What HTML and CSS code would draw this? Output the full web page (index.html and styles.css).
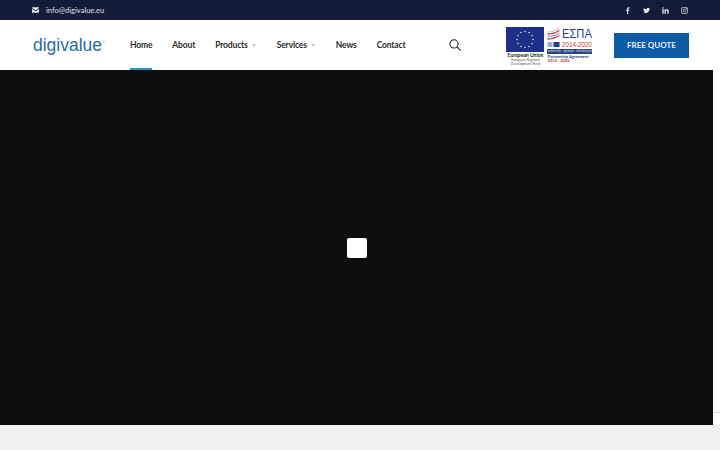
FILE: index.html
```html
<!DOCTYPE html>
<html lang="en">
<head>
    <meta charset="UTF-8">
    <meta name="viewport" content="width=device-width, initial-scale=1.0">
    <title>Digivalue</title>
    <link rel="stylesheet" href="styles.css">
</head>
<body>
    <div class="topbar">
        <a href="#" class="mail">
            <svg class="mail-icon" viewBox="0 0 14 11"><path d="M0 1.2C0 .5.5 0 1.2 0h11.6c.7 0 1.2.5 1.2 1.2v.5L7 6.2 0 1.7zM0 3.3l7 4.5 7-4.5v6.500c0 .7-.5 1.2-1.2 1.2H1.2C.5 11 0 10.500 0 9.800z" fill="#e8eaef"/></svg>
            info@digivalue.eu
        </a>
        <div class="social">
            <a href="#"><svg viewBox="0 0 10 10"><path d="M6 10V5.500h1.500L7.800 3.800H6V2.800c0-.5.200-.8.800-.8h1V.4C7.500.3 7.100.3 6.600.3 5.200.3 4.300 1.100 4.300 2.600v1.200H2.800v1.700h1.500V10z" fill="#e8eaef"/></svg></a>
            <a href="#"><svg viewBox="0 0 10 10"><path d="M10 2.100c-.4.200-.8.300-1.200.3.400-.2.800-.6.900-1.100-.4.200-.8.400-1.300.5C8 1.400 7.500 1.200 7 1.200 5.800 1.200 5 2.300 5.200 3.400 3.500 3.300 2 2.500 1 1.300.5 2.200.7 3.400 1.600 4c-.3 0-.6-.1-.9-.2 0 .9.600 1.700 1.600 1.900-.3.100-.6.100-.9 0 .3.800 1 1.300 1.900 1.300-.8.700-1.900 1-3 .9.900.6 2 .9 3.100.9 3.800 0 5.900-3.200 5.800-6 .4-.2.700-.5.800-.8z" fill="#e8eaef"/></svg></a>
            <a href="#"><svg viewBox="0 0 10 10"><path d="M.5 3.300h1.900V9.500H.5zM1.500.4a1.100 1.100 0 1 1 0 2.200 1.100 1.100 0 0 1 0-2.200zM3.600 3.300h1.800v.9c.3-.5.900-1 1.900-1 2 0 2.300 1.300 2.300 3v3.300H7.700V6.600c0-.7 0-1.600-1-1.600s-1.200.8-1.200 1.600v2.900H3.600z" fill="#e8eaef"/></svg></a>
            <a href="#"><svg viewBox="0 0 10 10" fill="none" stroke="#e8eaef"><rect x=".6" y=".6" width="8.800" height="8.800" rx="2.400"/><circle cx="5" cy="5" r="2"/><circle cx="7.500" cy="2.500" r=".4"/></svg></a>
        </div>
    </div>

    <header class="site-header">
        <a href="#" class="logo">digivalue<span class="logo-mark">®</span></a>
        <nav class="main-nav">
            <a href="#" class="active">Home</a>
            <a href="#">About</a>
            <a href="#" class="has-sub">Products</a>
            <a href="#" class="has-sub">Services</a>
            <a href="#">News</a>
            <a href="#">Contact</a>
        </nav>
        <svg class="search" viewBox="0 0 14 14" fill="none" stroke="#222" stroke-width="1.200"><circle cx="5.800" cy="5.800" r="4.800"/><path d="M9.300 9.300l4 4" stroke-linecap="round"/></svg>
        <div class="partners">
            <div class="eu">
                <svg class="eu-flag" viewBox="0 0 38 25">
                    <rect width="38" height="25" fill="#1c2f8a"/>
                    <g fill="#e9e39a">
                        <circle cx="19" cy="4.500" r=".8"/><circle cx="23" cy="5.500" r=".8"/><circle cx="26" cy="8.500" r=".8"/>
                        <circle cx="27" cy="12.500" r=".8"/><circle cx="26" cy="16.500" r=".8"/><circle cx="23" cy="19.500" r=".8"/>
                        <circle cx="19" cy="20.500" r=".8"/><circle cx="15" cy="19.500" r=".8"/><circle cx="12" cy="16.500" r=".8"/>
                        <circle cx="11" cy="12.500" r=".8"/><circle cx="12" cy="8.500" r=".8"/><circle cx="15" cy="5.500" r=".8"/>
                    </g>
                </svg>
                <div class="eu-title">European Union</div>
                <div class="eu-sub">European Regional<br>Development Fund</div>
            </div>
            <div class="espa">
                <div class="espa-top">
                    <svg class="espa-waves" viewBox="0 0 12 12" fill="none" stroke-width="1.300">
                        <path d="M0 4C4 4 8 3 12 0" stroke="#c9d2e2"/>
                        <path d="M0 6C4 6 8 5 12 2.500" stroke="#d0343a"/>
                        <path d="M0 8.500C4 8.500 8 7.500 12 5" stroke="#8f9fc0"/>
                        <path d="M0 11C4 11 8 10 12 7.500" stroke="#d0343a"/>
                    </svg>
                    <span class="espa-name">ΕΣΠΑ</span>
                </div>
                <div class="espa-mid">
                    <svg class="espa-flag" viewBox="0 0 12 5"><rect width="5" height="5" fill="#9fb0cc"/><rect x="6" width="6" height="5" fill="#1f3f88"/></svg>
                    <span class="espa-years">2014-2020</span>
                </div>
                <div class="espa-band">ανάπτυξη · εργασία · αλληλεγγύη</div>
                <div class="espa-foot">Partnership Agreement<br><span>2014 - 2020</span></div>
            </div>
        </div>
        <a href="#" class="quote-btn">FREE QUOTE</a>
    </header>

    <div class="stage-row">
        <section class="stage">
            <div class="loader"></div>
        </section>
    </div>

    <footer class="page-foot"></footer>
    <div class="captcha-edge"></div>
</body>
</html>
```

FILE: styles.css
```css
html, body {
    margin: 0;
    height: 450px;
    overflow: hidden;
    font-family: 'Lato', 'Open Sans', sans-serif;
    background: #f1f1f1;
}

a {
    text-decoration: none;
}

/* Top bar */
.topbar {
    height: 20px;
    background: #131d3a;
    display: flex;
    justify-content: space-between;
    align-items: center;
    padding: 0 32px;
}

.mail {
    display: flex;
    align-items: center;
    gap: 7px;
    color: #d4d7df;
    font-size: 7.500px;
    font-weight: 500;
}

.mail-icon {
    width: 7px;
    height: 6px;
}

.social {
    display: flex;
    align-items: center;
    gap: 12px;
}

.social a {
    display: flex;
}

.social svg {
    width: 7px;
    height: 7px;
}

/* Header */
.site-header {
    height: 50px;
    background: #fff;
    display: flex;
    align-items: center;
    padding: 0 31px 0 33px;
}

.logo {
    width: 97px;
    color: #2a6aa5;
    font-family: 'Liberation Sans', Arial, sans-serif;
    font-size: 17.500px;
    flex-shrink: 0;
}

.logo-mark {
    font-size: 4px;
    vertical-align: 8px;
    color: #7d9fc4;
}

.main-nav {
    display: flex;
    align-self: stretch;
    gap: 20px;
}

.main-nav a {
    display: flex;
    align-items: center;
    color: #2c2c2c;
    font-size: 8.500px;
    font-weight: 700;
    letter-spacing: -.15px;
    padding-top: 2px;
    border-bottom: 2px solid transparent;
}

.main-nav a.active {
    border-bottom-color: #2f95c4;
}

.main-nav a.has-sub {
    margin-right: 1px;
}

.main-nav a.has-sub::after {
    content: "";
    margin-left: 4px;
    border: 2px solid transparent;
    border-top: 3px solid #c4c4c4;
    border-bottom: 0;
}

.search {
    width: 12px;
    height: 12px;
    margin-left: 44px;
    flex-shrink: 0;
}

.partners {
    display: flex;
    gap: 3px;
    margin-left: 45px;
    margin-top: 3px;
    flex-shrink: 0;
}

.eu {
    width: 38px;
    text-align: center;
    color: #555;
}

.eu-flag {
    display: block;
    width: 38px;
    height: 25px;
}

.eu-title {
    margin-top: 1px;
    font-size: 5px;
    line-height: 5px;
    font-weight: 700;
    color: #222;
    white-space: nowrap;
}

.eu-sub {
    font-size: 3.500px;
    line-height: 4px;
    white-space: nowrap;
}

.espa {
    width: 45px;
}

.espa-top {
    display: flex;
    align-items: center;
    gap: 2px;
    height: 14px;
}

.espa-waves {
    width: 13px;
    height: 12px;
    flex-shrink: 0;
}

.espa-name {
    font-family: 'Liberation Sans', Arial, sans-serif;
    font-size: 13px;
    line-height: 13px;
    margin-top: -1px;
    color: #1f3f88;
    transform: scaleX(.86);
    transform-origin: left center;
}

.espa-mid {
    display: flex;
    align-items: center;
    gap: 2px;
    height: 7px;
}

.espa-flag {
    width: 13px;
    height: 5px;
    flex-shrink: 0;
}

.espa-years {
    font-family: 'Liberation Sans', Arial, sans-serif;
    font-size: 8px;
    line-height: 7px;
    color: #c9343a;
    white-space: nowrap;
    transform: scaleX(.78);
    transform-origin: left center;
}

.espa-band {
    margin-top: 1px;
    height: 5px;
    line-height: 5px;
    background: #27407f;
    color: #dfe5f2;
    font-size: 3px;
    text-align: center;
    white-space: nowrap;
    overflow: hidden;
}

.espa-foot {
    margin-top: 1px;
    font-size: 4px;
    line-height: 4px;
    font-weight: 700;
    color: #27407f;
    white-space: nowrap;
}

.espa-foot span {
    color: #c9343a;
}

.quote-btn {
    width: 75px;
    height: 25px;
    margin-left: auto;
    background: #0d5aa7;
    color: #e9f0f8;
    font-size: 8px;
    font-weight: 700;
    display: flex;
    align-items: center;
    justify-content: center;
    flex-shrink: 0;
}

/* Main area */
.stage-row {
    height: 355px;
    padding-right: 7px;
    background: #fff;
}

.stage {
    height: 100%;
    background: #0e0e0e;
    display: flex;
    align-items: center;
    justify-content: center;
}

.loader {
    width: 20px;
    height: 20px;
    background: #fff;
    border-radius: 2px;
}

.page-foot {
    height: 25px;
    background: #f1f1f1;
}

/* edge of the floating captcha badge */
.captcha-edge {
    position: absolute;
    top: 412px;
    left: 713px;
    width: 7px;
    height: 1px;
    background: #d8d8d8;
}
```
